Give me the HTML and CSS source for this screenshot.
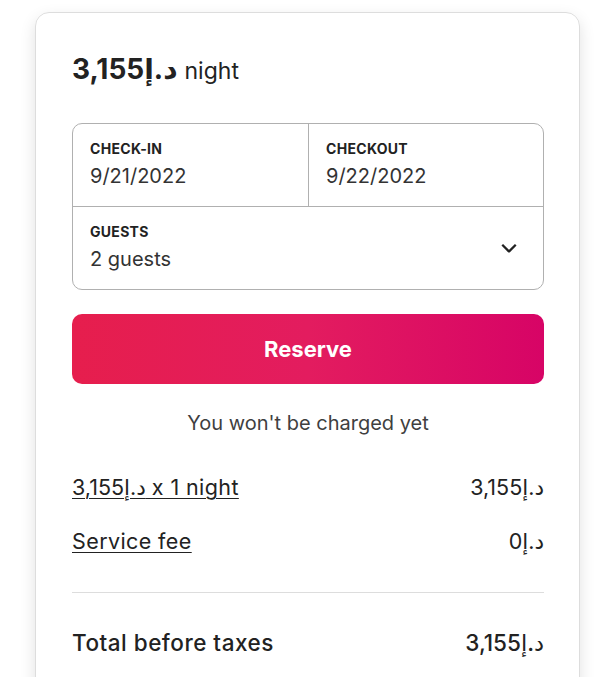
FILE: index.html
```html
<!DOCTYPE html>
<html lang="en">

<head>
    <meta charset="UTF-8" />
    <meta name="viewport" content="width=device-width, initial-scale=1.0" />
    <title>Reserve</title>
    <link rel="stylesheet" href="styles.css">
</head>

<body>
    <div class="booking-card">
        <div class="price-line">
            <span class="price">د.إ3,155</span>
            <span class="per">night</span>
        </div>

        <div class="picker">
            <div class="dates">
                <div class="cell">
                    <div class="cell-label">CHECK-IN</div>
                    <div class="cell-value">9/21/2022</div>
                </div>
                <div class="cell cell-right">
                    <div class="cell-label">CHECKOUT</div>
                    <div class="cell-value">9/22/2022</div>
                </div>
            </div>
            <div class="cell guests">
                <div>
                    <div class="cell-label">GUESTS</div>
                    <div class="cell-value">2 guests</div>
                </div>
                <svg class="chevron" width="18" height="18" viewBox="0 0 32 32" fill="none" stroke="#222" stroke-width="4">
                    <path d="M28 12 16.7 23.3a1 1 0 0 1-1.4 0L4 12"></path>
                </svg>
            </div>
        </div>

        <button class="reserve-btn">Reserve</button>

        <p class="note">You won't be charged yet</p>

        <div class="fee-row">
            <span class="fee-link">د.إ3,155 x 1 night</span>
            <span>د.إ3,155</span>
        </div>
        <div class="fee-row second">
            <span class="fee-link">Service fee</span>
            <span>د.إ0</span>
        </div>

        <hr class="divider">

        <div class="fee-row total">
            <span>Total before taxes</span>
            <span>د.إ3,155</span>
        </div>
    </div>
</body>

</html>
```

FILE: styles.css
```css
body {
    margin: 0;
    background: #ffffff;
    font-family: 'Inter', 'DejaVu Sans', sans-serif;
    color: #222222;
}

.booking-card {
    margin: 12px 22px 0 35px;
    padding: 41px 35px 60px 36px;
    border: 1px solid #dddddd;
    border-radius: 14px;
    box-shadow: 0 6px 16px rgba(0, 0, 0, 0.12);
    height: 700px;
    box-sizing: border-box;
}

.price-line {
    display: flex;
    align-items: baseline;
    gap: 7px;
    height: 30px;
    line-height: 30px;
}

.price {
    font-size: 28px;
    font-weight: 700;
}

.per {
    font-size: 23px;
    font-weight: 400;
}

.picker {
    margin-top: 39px;
    border: 1px solid #b0b0b0;
    border-radius: 10px;
}

.dates {
    display: grid;
    grid-template-columns: 1fr 1fr;
    border-bottom: 1px solid #b0b0b0;
}

.cell {
    padding: 16px 17px 18px;
}

.cell-right {
    border-left: 1px solid #b0b0b0;
}

.cell-label {
    font-size: 14px;
    font-weight: 700;
    line-height: 18px;
    letter-spacing: 0.3px;
}

.cell-value {
    margin-top: 6px;
    font-size: 20px;
    line-height: 24px;
    color: #333333;
}

.guests {
    display: flex;
    align-items: center;
    justify-content: space-between;
}

.chevron {
    margin-right: 8px;
}

.reserve-btn {
    display: block;
    width: 100%;
    margin-top: 24px;
    height: 70px;
    border: none;
    border-radius: 10px;
    background: linear-gradient(to right, #e61e4d 0%, #e31c5f 50%, #d70466 100%);
    color: #ffffff;
    font-family: inherit;
    font-size: 22px;
    font-weight: 700;
    cursor: pointer;
}

.note {
    margin: 27px 0 0;
    text-align: center;
    font-size: 20px;
    line-height: 24px;
    color: #3f3f3f;
}

.fee-row {
    display: flex;
    justify-content: space-between;
    margin-top: 40px;
    font-size: 21.5px;
    line-height: 24px;
    letter-spacing: 0.4px;
}

.fee-row.second {
    margin-top: 30px;
}

.fee-link {
    text-decoration: underline;
    text-underline-offset: 3px;
    text-decoration-thickness: 1px;
}

.divider {
    margin: 39px 0 0;
    border: none;
    border-top: 1px solid #dddddd;
}

.fee-row.total {
    margin-top: 38px;
    font-size: 22.5px;
    font-weight: 500;
    letter-spacing: 0.5px;
}
```
